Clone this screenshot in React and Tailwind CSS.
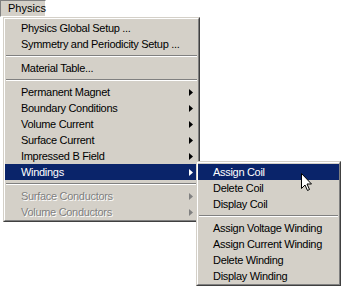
import React from "react";

const font = { fontFamily: '"Liberation Sans", Arial, sans-serif' };

function Arrow({ color = "#000" }) {
  return (
    <svg width="4" height="7" viewBox="0 0 4 7" className="shrink-0">
      <path d="M0 0 L4 3.5 L0 7 Z" fill={color} />
    </svg>
  );
}

function Item({ label, arrow, active, disabled, pl = "pl-[16px]" }) {
  const base = `flex h-[16px] items-center justify-between ${pl} pr-[5px] text-[11px] leading-none tracking-[-0.3px]`;
  if (active)
    return (
      <div className={`${base} bg-[#0a246a] text-white`}>
        <span>{label}</span>
        {arrow && <Arrow color="#fff" />}
      </div>
    );
  if (disabled)
    return (
      <div className={`${base} text-[#808080]`}>
        <span className="[text-shadow:1px_1px_0_#ffffff]">{label}</span>
        {arrow && <Arrow color="#808080" />}
      </div>
    );
  return (
    <div className={`${base} text-black`}>
      <span>{label}</span>
      {arrow && <Arrow />}
    </div>
  );
}

function Sep() {
  return (
    <div className="flex h-[8px] flex-col justify-center px-[1px]">
      <div className="h-[1px] bg-[#808080]" />
      <div className="h-[1px] bg-white" />
    </div>
  );
}

function Frame({ className, children }) {
  return (
    <div className={`border border-t-[#d4d0c8] border-l-[#d4d0c8] border-r-[#404040] border-b-[#404040] ${className}`}>
      <div className="border border-t-white border-l-white border-r-[#808080] border-b-[#808080] bg-[#d4d0c8] pt-[1px] h-full">
        {children}
      </div>
    </div>
  );
}

export default function App() {
  return (
    <div className="relative h-[287px] w-[342px] overflow-hidden bg-white" style={font}>
      <div className="flex h-[17px] w-[46px] items-center border border-t-[#808080] border-l-[#808080] border-r-white border-b-white bg-[#d4d0c8] pl-[7px] text-[11px] text-black">
        Physics
      </div>
      <Frame className="ml-[3px] h-[205px] w-[197px]">
        <Item label="Physics Global Setup ..." />
        <Item label="Symmetry and Periodicity Setup ..." />
        <Sep />
        <Item label="Material Table..." />
        <Sep />
        <Item label="Permanent Magnet" arrow />
        <Item label="Boundary Conditions" arrow />
        <Item label="Volume Current" arrow />
        <Item label="Surface Current" arrow />
        <Item label="Impressed B Field" arrow />
        <Item label="Windings" arrow active />
        <Sep />
        <Item label="Surface Conductors" arrow disabled />
        <Item label="Volume Conductors" arrow disabled />
      </Frame>

      <div className="absolute left-[196px] top-[161px]">
        <Frame className="h-[125px] w-[145px]">
          <Item label="Assign Coil" active pl="pl-[15px]" />
          <Item label="Delete Coil" pl="pl-[15px]" />
          <Item label="Display Coil" pl="pl-[15px]" />
          <Sep />
          <Item label="Assign Voltage Winding" pl="pl-[15px]" />
          <Item label="Assign Current Winding" pl="pl-[15px]" />
          <Item label="Delete Winding" pl="pl-[15px]" />
          <Item label="Display Winding" pl="pl-[15px]" />
        </Frame>
      </div>

      <svg className="absolute left-[301px] top-[173px]" width="12" height="19" viewBox="0 0 12 19">
        <path
          d="M0.5 0.5 L0.5 15.5 L4 12 L6.5 17.5 L8.5 16.5 L6 11 L10.5 11 Z"
          fill="#fff"
          stroke="#000"
          strokeWidth="1"
          strokeLinejoin="miter"
        />
      </svg>
    </div>
  );
}
